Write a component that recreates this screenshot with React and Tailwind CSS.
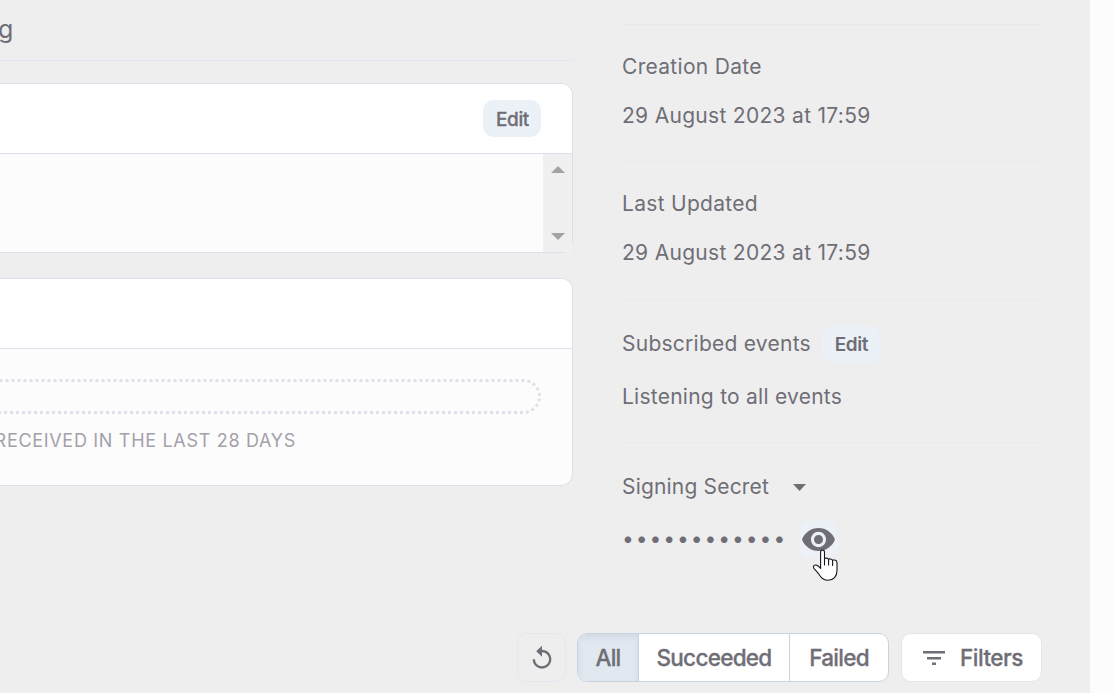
function EditButton({ bold }) {
  return (
    <button
      className={
        "flex h-[37px] w-[58px] items-center justify-center rounded-[10px] bg-[#ebf1f6] text-[19px] tracking-[-0.4px] text-[#6f6e77] " +
        (bold ? "pt-px pl-px font-semibold" : "pt-[3px] pl-px font-medium [-webkit-text-stroke:0.3px_#6f6e77]")
      }
    >
      Edit
    </button>
  );
}

function Heading() {
  return (
    <div className="flex h-[61px] w-[573px] border-b border-[#e0e6f2] text-[25px]">
      <span className="-ml-[2px] h-[60px] leading-[59px]">g</span>
    </div>
  );
}

function DescriptionCard() {
  return (
    <div className="mt-[22px] flex h-[170px] w-[573px] flex-col rounded-r-[12px] border border-l-0 border-[#dfdfeb] bg-[#fcfcfc]">
      <div className="flex h-[70px] shrink-0 items-center justify-end rounded-tr-[11px] border-b border-[#dfdfeb] bg-white pr-[31px]">
        <EditButton />
      </div>
      <div className="flex flex-1 justify-end">
        <div className="flex w-[29px] flex-col items-center justify-between bg-[#f0f0f0] pt-[12px] pb-[12px]">
          <svg width="14" height="7" viewBox="0 0 14 7" fill="#a3a3a3"><path d="M0 7 7 0l7 7z" /></svg>
          <svg width="14" height="7" viewBox="0 0 14 7" fill="#a3a3a3"><path d="M0 0h14L7 7z" /></svg>
        </div>
      </div>
    </div>
  );
}

function ActivityCard() {
  return (
    <div className="mt-[25px] h-[208px] w-[573px] overflow-hidden rounded-r-[12px] border border-l-0 border-[#dfdfeb] bg-[#fcfcfc]">
      <div className="h-[70px] border-b border-[#dfdfeb] bg-white" />
      <div className="mt-[30px] -ml-[30px] h-[35px] w-[571px] rounded-full border-[3px] border-dotted border-[#e1e0ea]" />
      <div className="mt-[14px] flex w-[296px] justify-end text-[18px] leading-[26px] tracking-[0.69px] whitespace-nowrap text-[#a3a1aa]">
        RECEIVED IN THE LAST 28 DAYS
      </div>
    </div>
  );
}

function Toolbar() {
  return (
    <div className="flex h-[49px] text-[22.5px] font-medium tracking-[-0.72px] text-[#6f6e77] [-webkit-text-stroke:0.3px_#6f6e77]">
      <button className="mr-[11px] flex w-[49px] items-center justify-center rounded-[10px] border border-[#e4e8f0]">
        <svg width="28" height="28" viewBox="0 0 24 24" fill="#6f6e77">
          <path d="M12 5V1.5L7 6.2l5 4.7V7c3.31 0 6 2.69 6 6s-2.69 6-6 6-6-2.69-6-6H4c0 4.42 3.58 8 8 8s8-3.58 8-8-3.58-8-8-8z" />
        </svg>
      </button>
      <div className="mr-[12px] flex w-[312px] overflow-hidden rounded-[10px] border border-[#c9d3df] bg-white">
        <button className="w-[60px] bg-[#e1e8f0] shadow-[inset_0_3px_6px_rgba(90,110,130,0.12)]">All</button>
        <button className="w-[151px] border-l border-[#c9d3df]">Succeeded</button>
        <button className="w-[99px] border-l border-[#c9d3df]">Failed</button>
      </div>
      <button className="flex w-[141px] items-center rounded-[10px] border border-[#e2e6ee] bg-white pl-[21px]">
        <svg width="22" height="14" viewBox="0 0 22 14" fill="#6f6e77">
          <path d="M0 0h22v2.5H0zM4 6h14v2.4H4zM9 11.5h4V14H9z" />
        </svg>
        <span className="ml-[15px] tracking-[-0.5px]">Filters</span>
      </button>
    </div>
  );
}

function Cursor() {
  return (
    <svg className="absolute top-[28px] left-[12px]" width="26" height="33" viewBox="0 0 26 33">
      <path
        d="M8.6 19.5V3.2C8.6 1.7 9.4 1 10.5 1s2 .8 2 2.2v7c0-1.5 4-1.6 4.1.6 0-1.4 3.9-1.2 4 .8.2-1.2 4.4-.9 4.4 1.8v8c0 6-3.6 9.8-9 9.8-4.2 0-6.8-2.4-8.4-5-1.5-2.6-3.7-4.5-5.7-6.9-1.5-2 .6-4 3-3 1.5.7 2.7 1.9 3.7 3.2z"
        fill="#fff"
        stroke="#15151f"
        strokeWidth="1.1"
        strokeLinejoin="round"
      />
      <path d="M12.5 10v6M16.6 11v5M20.6 12v4.5" stroke="#15151f" strokeWidth="1.1" strokeLinecap="round" />
    </svg>
  );
}

function Details() {
  return (
    <div className="flex w-[420px] flex-col pt-[24px] text-[21px] leading-[30px] font-[380] tracking-[0.3px]">
      <section className="h-[137px] border-t border-[#e8e9f0] pt-[27px]">
        <h3>Creation Date</h3>
        <p className="mt-[19px]">29 August 2023 at 17:59</p>
      </section>
      <section className="h-[138px] border-t border-[#eaeaed] pt-[27px]">
        <h3>Last Updated</h3>
        <p className="mt-[19px]">29 August 2023 at 17:59</p>
      </section>
      <section className="h-[143px] border-t border-[#eaeaed] pt-[26px]">
        <div className="flex h-[37px] items-center gap-[11px]">
          <h3 className="pb-px tracking-[0.25px]">Subscribed events</h3>
          <EditButton bold />
        </div>
        <p className="mt-[19px] tracking-[0.25px]">Listening to all events</p>
      </section>
      <section className="border-t border-[#e9eaee] pt-[29px]">
        <div className="flex h-[30px] items-center gap-[24px]">
          <h3 className="tracking-[0.18px]">Signing Secret</h3>
          <svg width="13" height="7" viewBox="0 0 13 7" fill="#6f6e77"><path d="M0 0h13L6.5 7z" /></svg>
        </div>
        <div className="mt-[19px] flex h-[37px] items-center">
          <span className="w-[178px] pb-px tracking-[1.95px] whitespace-nowrap">••••••••••••</span>
          <div className="relative flex h-[37px] w-[37px] items-center justify-center rounded-[8px] bg-[#ebf1f6]">
            <svg width="33" height="23" viewBox="1 4.5 22 15" preserveAspectRatio="none" fill="#6f6e77">
              <path d="M12 4.5C7 4.5 2.73 7.61 1 12c1.73 4.39 6 7.5 11 7.5s9.27-3.11 11-7.5c-1.73-4.39-6-7.5-11-7.5zM12 17c-2.76 0-5-2.24-5-5s2.24-5 5-5 5 2.24 5 5-2.24 5-5 5zm0-8c-1.66 0-3 1.34-3 3s1.34 3 3 3 3-1.34 3-3-1.34-3-3-3z" />
            </svg>
            <Cursor />
          </div>
        </div>
      </section>
    </div>
  );
}

export default function App() {
  return (
    <div className="flex h-[693px] w-[1114px] overflow-hidden bg-[#fcfcfc] font-['Inter',sans-serif] text-[#6f6e77]">
      <main className="flex h-full w-[1090px] flex-col bg-[#eeeeee]">
        <div className="flex h-[633px] gap-[49px]">
          <div className="w-[573px]">
            <Heading />
            <DescriptionCard />
            <ActivityCard />
          </div>
          <Details />
        </div>
        <div className="flex justify-end pr-[48px]">
          <Toolbar />
        </div>
      </main>
    </div>
  );
}
